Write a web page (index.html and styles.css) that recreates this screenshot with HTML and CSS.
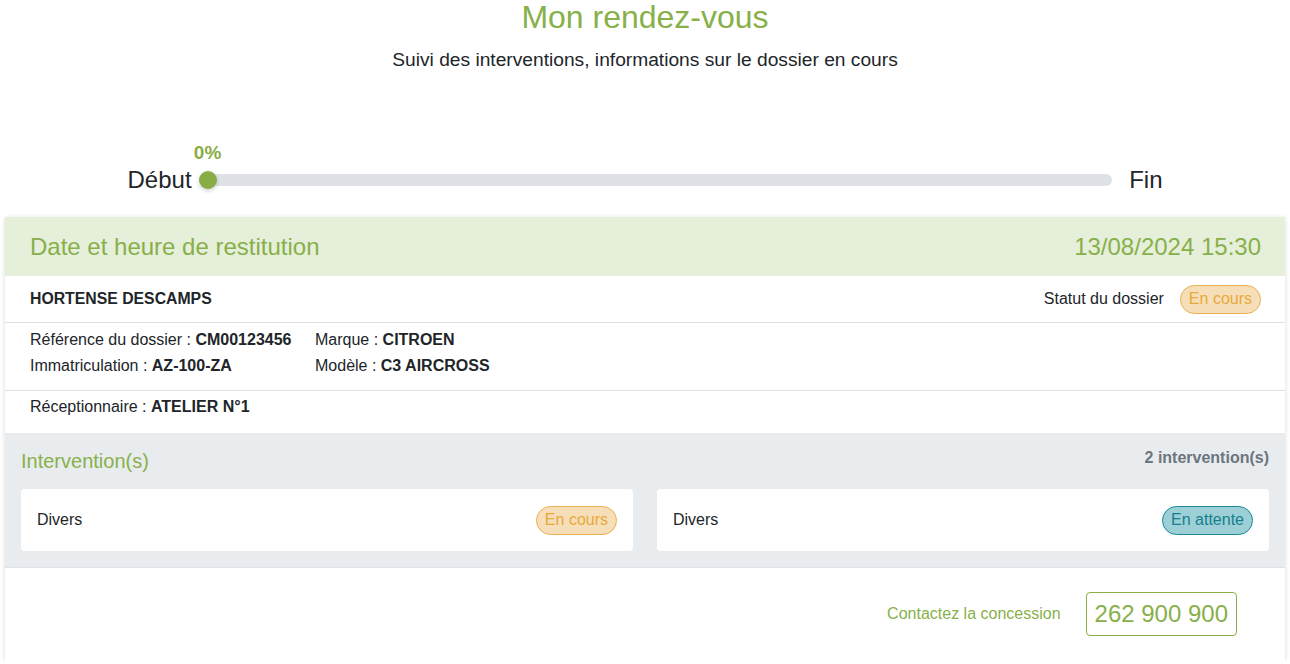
FILE: index.html
```html
<!DOCTYPE html>
<html lang="fr">
<head>
<meta charset="utf-8">
<title>Mon rendez-vous</title>
<link rel="stylesheet" href="styles.css">
</head>
<body>
<div class="page">
  <h1 class="title">Mon rendez-vous</h1>
  <p class="subtitle">Suivi des interventions, informations sur le dossier en cours</p>

  <div class="progress">
    <span class="progress-label">Début</span>
    <div class="track">
      <span class="percent">0%</span>
      <span class="knob"></span>
    </div>
    <span class="progress-label progress-end">Fin</span>
  </div>

  <div class="card">
    <div class="card-header">
      <span>Date et heure de restitution</span>
      <span>13/08/2024 15:30</span>
    </div>
    <div class="row row-client">
      <span class="client">HORTENSE DESCAMPS</span>
      <div class="status">
        <span>Statut du dossier</span>
        <span class="badge badge-progress">En cours</span>
      </div>
    </div>
    <div class="row row-info">
      <div class="info-col info-col-first">
        <div>Référence du dossier : <b>CM00123456</b></div>
        <div>Immatriculation : <b>AZ-100-ZA</b></div>
      </div>
      <div class="info-col">
        <div>Marque : <b>CITROEN</b></div>
        <div>Modèle : <b>C3 AIRCROSS</b></div>
      </div>
    </div>
    <div class="row row-recep">
      <div>Réceptionnaire : <b>ATELIER N°1</b></div>
    </div>
    <div class="interventions">
      <div class="interventions-head">
        <span class="interventions-title">Intervention(s)</span>
        <span class="interventions-count">2 intervention(s)</span>
      </div>
      <div class="interventions-grid">
        <div class="intervention">
          <span>Divers</span>
          <span class="badge badge-progress">En cours</span>
        </div>
        <div class="intervention">
          <span>Divers</span>
          <span class="badge badge-wait">En attente</span>
        </div>
      </div>
    </div>
    <div class="footer">
      <span class="contact">Contactez la concession</span>
      <span class="phone">262 900 900</span>
    </div>
  </div>
</div>
</body>
</html>
```

FILE: styles.css
```css
* { box-sizing: border-box; }

html, body {
  margin: 0;
  padding: 0;
  background: #ffffff;
}

body {
  font-family: "Liberation Sans", Arial, sans-serif;
  color: #212529;
  font-size: 16px;
}

.page {
  padding: 0 5px;
}

.title {
  margin: 0;
  font-size: 32px;
  line-height: 34px;
  font-weight: 400;
  text-align: center;
  color: #88b04a;
}

.subtitle {
  margin: 14px 0 0;
  font-size: 19.2px;
  line-height: 24px;
  text-align: center;
  color: #212529;
}

.progress {
  display: flex;
  align-items: center;
  width: 1035px;
  margin: 94px auto 0;
}

.progress-label {
  font-size: 24px;
  line-height: 28px;
  color: #212529;
}

.progress-end {
  margin-left: 17px;
}

.track {
  position: relative;
  flex: 1;
  height: 12px;
  margin-left: 8px;
  border-radius: 6px;
  background: #dee2e6;
}

.knob {
  position: absolute;
  left: -1px;
  top: -3px;
  width: 18px;
  height: 18px;
  border-radius: 50%;
  background: #88ad45;
  box-shadow: 0 2px 4px rgba(0, 0, 0, 0.18);
}

.percent {
  position: absolute;
  left: 8px;
  bottom: 22px;
  transform: translateX(-50%);
  font-size: 19px;
  line-height: 22px;
  font-weight: 700;
  color: #88ad45;
}

.card {
  margin-top: 23px;
  background: #ffffff;
  box-shadow: 0 1px 5px rgba(0, 0, 0, 0.14);
}

.card-header {
  display: flex;
  justify-content: space-between;
  align-items: center;
  height: 59px;
  padding: 0 24px 0 25px;
  background: #e6efda;
  color: #88b04a;
  font-size: 24px;
}

.row {
  padding: 0 25px;
  border-bottom: 1px solid #dee2e6;
}

.row-client {
  display: flex;
  justify-content: space-between;
  align-items: center;
  height: 47px;
  padding-right: 24px;
}

.client {
  font-weight: 700;
  font-size: 15.8px;
}

.status {
  display: flex;
  align-items: center;
  gap: 16px;
}

.badge {
  display: inline-block;
  padding: 0 8px 1px;
  border: 1px solid;
  border-radius: 15px;
  font-size: 16px;
  line-height: 26px;
}

.badge-progress {
  background: #f6deb8;
  border-color: #e9b24f;
  color: #e8a93c;
}

.badge-wait {
  background: #9dcfd6;
  border-color: #17899a;
  color: #16808f;
}

.row-info {
  display: flex;
  padding-top: 4px;
  padding-bottom: 11px;
  line-height: 26px;
}

.info-col-first {
  width: 285px;
}

.row-recep {
  padding-top: 3px;
  padding-bottom: 13px;
  line-height: 26px;
  border-bottom: none;
}

.interventions {
  background: #e9ecef;
  padding: 16px 16px 16px;
  border-bottom: 1px solid #dee2e6;
}

.interventions-head {
  display: flex;
  justify-content: space-between;
  align-items: flex-start;
  height: 24px;
  margin-bottom: 16px;
}

.interventions-title {
  font-size: 20px;
  line-height: 24px;
  color: #88b04a;
}

.interventions-count {
  font-size: 16px;
  line-height: 18px;
  font-weight: 700;
  color: #6c757d;
}

.interventions-grid {
  display: grid;
  grid-template-columns: 1fr 1fr;
  gap: 24px;
}

.intervention {
  display: flex;
  justify-content: space-between;
  align-items: center;
  height: 62px;
  padding: 0 16px;
  background: #ffffff;
  border-radius: 4px;
}

.footer {
  display: flex;
  justify-content: flex-end;
  align-items: center;
  gap: 25px;
  padding: 24px 48px 25px 0;
}

.contact {
  color: #88b04a;
  font-size: 16px;
}

.phone {
  display: inline-block;
  height: 44px;
  padding: 0 8px;
  border: 1px solid #88b04a;
  border-radius: 4px;
  color: #88b04a;
  font-size: 24px;
  line-height: 42px;
}
```
